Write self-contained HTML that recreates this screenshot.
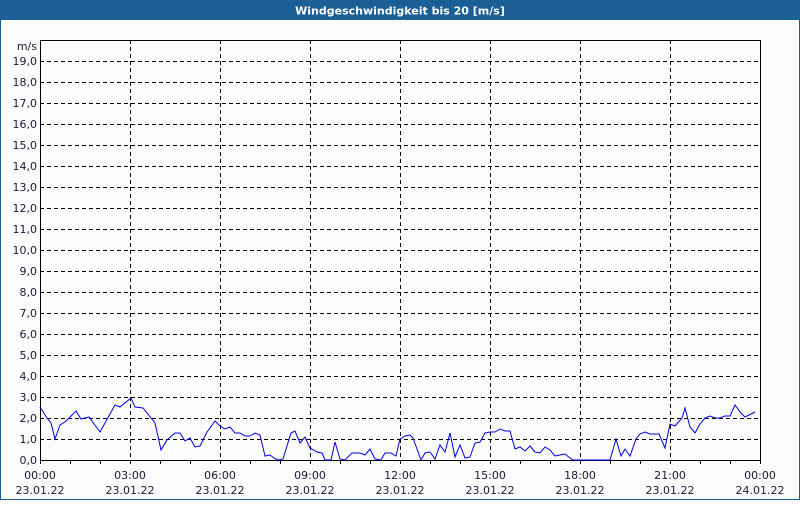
<!DOCTYPE html>
<html><head><meta charset="utf-8"><style>
body{margin:0;width:800px;height:500px;overflow:hidden;background:#fff;}
</style></head><body>
<svg width="800" height="500" xmlns="http://www.w3.org/2000/svg" font-family="DejaVu Sans, Liberation Sans, sans-serif" font-size="11">
<rect x="0" y="0" width="800" height="500" fill="#fcfcfc"/>
<rect x="0" y="0" width="800" height="20" fill="#1c5e96"/>
<rect x="0.5" y="0.5" width="799" height="499" fill="none" stroke="#1c5e96"/>
<text x="400" y="14.5" fill="#fff" font-weight="bold" text-anchor="middle">Windgeschwindigkeit bis 20 [m/s]</text>
<g stroke="#000" stroke-width="1" stroke-dasharray="4,3" fill="none">
<path d="M40 439.5H760M40 418.5H760M40 397.5H760M40 376.5H760M40 355.5H760M40 334.5H760M40 313.5H760M40 292.5H760M40 271.5H760M40 250.5H760M40 229.5H760M40 208.5H760M40 187.5H760M40 166.5H760M40 145.5H760M40 124.5H760M40 103.5H760M40 82.5H760M40 61.5H760"/>
<path d="M130.5 40V460M220.5 40V460M310.5 40V460M400.5 40V460M490.5 40V460M580.5 40V460M670.5 40V460"/>
</g>
<g stroke="#000" stroke-width="1" fill="none">
<path d="M40.5 40V464M40 40.5H760.5M760.5 40V464M40 460.5H761"/>
<path d="M70.5 460v4M100.5 460v4M130.5 460v4M160.5 460v4M190.5 460v4M220.5 460v4M250.5 460v4M280.5 460v4M310.5 460v4M340.5 460v4M370.5 460v4M400.5 460v4M430.5 460v4M460.5 460v4M490.5 460v4M520.5 460v4M550.5 460v4M580.5 460v4M610.5 460v4M640.5 460v4M670.5 460v4M700.5 460v4M730.5 460v4"/>
</g>
<polyline fill="none" stroke="#0000ee" stroke-width="1" points="40,407 47,418 51,423 55,439 60,425 65,422 76,411 81,419 89,417 100,432 115,405 120,407 131,398 135,407 143,408 155,423 161,450 167,440 175,433 180,433 185,441 190,438 195,447 200,446 207,432 210,428 215,421 220,426 225,429 230,427 235,433 240,433 245,436 250,436 255,433 260,435 265,456 270,455 274,458 278,460 283,459 291,433 295,431 300,443 305,437 310,448 317,452 322,453 325,460 331,460 335,442 340,459 345,460 352,453 360,453 365,455 370,449 375,459 381,460 385,453 391,453 396,456 400,439 405,436 410,435 413,438 421,460 425,453 430,452 435,459 440,445 445,452 450,433 455,457 460,445 465,458 470,457 475,443 480,442 485,433 490,432 495,432 500,429 505,431 510,431 515,449 520,447 525,451 530,446 535,452 540,453 545,447 550,450 555,456 560,455 565,454 570,458 573,460 610,460 616,439 621,456 625,449 630,456 636,439 640,434 645,432 650,434 659,434 665,448 670,424 675,426 682,418 685,408 690,427 695,433 700,424 705,418 710,416 715,418 720,418 725,416 730,416 735,405 740,412 745,417 755,412"/>
<g fill="#1a1a3a" text-anchor="end">
<text x="37" y="50">m/s</text>
<text x="37" y="65">19,0</text><text x="37" y="86">18,0</text><text x="37" y="107">17,0</text><text x="37" y="128">16,0</text><text x="37" y="149">15,0</text><text x="37" y="170">14,0</text><text x="37" y="191">13,0</text><text x="37" y="212">12,0</text><text x="37" y="233">11,0</text><text x="37" y="254">10,0</text><text x="37" y="275">9,0</text><text x="37" y="296">8,0</text><text x="37" y="317">7,0</text><text x="37" y="338">6,0</text><text x="37" y="359">5,0</text><text x="37" y="380">4,0</text><text x="37" y="401">3,0</text><text x="37" y="422">2,0</text><text x="37" y="443">1,0</text><text x="37" y="464">0,0</text>
</g>
<g fill="#1a1a3a" text-anchor="middle">
<text x="40" y="479">00:00</text><text x="40" y="494">23.01.22</text>
<text x="130" y="479">03:00</text><text x="130" y="494">23.01.22</text>
<text x="220" y="479">06:00</text><text x="220" y="494">23.01.22</text>
<text x="310" y="479">09:00</text><text x="310" y="494">23.01.22</text>
<text x="400" y="479">12:00</text><text x="400" y="494">23.01.22</text>
<text x="490" y="479">15:00</text><text x="490" y="494">23.01.22</text>
<text x="580" y="479">18:00</text><text x="580" y="494">23.01.22</text>
<text x="670" y="479">21:00</text><text x="670" y="494">23.01.22</text>
<text x="760" y="479">00:00</text><text x="760" y="494">24.01.22</text>
</g>
</svg>
</body></html>
